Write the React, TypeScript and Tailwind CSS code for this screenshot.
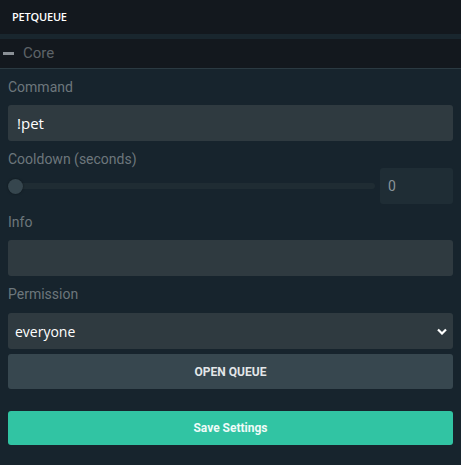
import React from "react";

export default function App() {
  return (
    <div className="w-[461px] h-[465px] bg-[#17242d] font-['Roboto',sans-serif] overflow-hidden flex flex-col">
      <div className="h-[34px] bg-[#13181e] flex items-center pl-[12px]">
        <span className="text-[11px] text-white font-['Open_Sans',sans-serif] font-semibold tracking-[-0.2px]">PETQUEUE</span>
      </div>
      <div className="h-[5px] bg-[#19262e]" />
      <div className="h-[30px] bg-[#13181e] flex items-center border-b border-[#2b3a42]">
        <div className="ml-[3px] w-[11px] h-[3px] bg-[#8a9096]" />
        <span className="ml-[9px] text-[15px] text-[#5d6368]">Core</span>
      </div>
      <div className="flex flex-col px-[8px]">
        <div className="h-[36px] flex items-center text-[14px] text-[#6d777c] pt-[1px]">Command</div>
        <div className="h-[36px] rounded-[3px] bg-[#2f3a40] flex items-center pl-[9px] text-[15px] text-white font-['Open_Sans',sans-serif]">!pet</div>
        <div className="h-[36px] flex items-center text-[14px] text-[#6d777c]">Cooldown (seconds)</div>
        <div className="flex items-center gap-[5px] -mt-[9px]">
          <div className="relative flex-1 h-[36px] flex items-center">
            <div className="w-full h-[6px] rounded-full bg-[#1f2c33] ml-[6px]" />
            <div className="absolute left-0 top-[11px] w-[15px] h-[15px] rounded-full bg-[#36464e] shadow-[0_0_2px_rgba(0,0,0,0.5)]" />
          </div>
          <div className="w-[73px] h-[36px] rounded-[3px] bg-[#1f2d35] flex items-center pl-[8px] text-[14px] text-[#8a9399]">0</div>
        </div>
        <div className="h-[36px] flex items-center text-[14px] text-[#6d777c]">Info</div>
        <div className="h-[36px] rounded-[3px] bg-[#2f3a40]" />
        <div className="h-[37px] flex items-center text-[14px] text-[#6d777c]">Permission</div>
        <div className="h-[36px] rounded-[3px] bg-[#2f3a40] flex items-center pl-[7px] pr-[6px] justify-between">
          <span className="text-[14px] text-white font-['Open_Sans',sans-serif]">everyone</span>
          <svg width="10" height="7" viewBox="0 0 10 7"><path d="M1 1.5 L5 5.5 L9 1.5" stroke="white" strokeWidth="2.2" fill="none" /></svg>
        </div>
        <div className="mt-[5px] h-[35px] rounded-[3px] bg-[#37474f] flex items-center justify-center text-[12px] font-bold text-[#e3e6e8]">OPEN QUEUE</div>
        <div className="mt-[22px] h-[34px] rounded-[3px] bg-[#31c4a3] flex items-center justify-center text-[12px] font-bold text-[#f0fbf8]">Save Settings</div>
      </div>
    </div>
  );
}
